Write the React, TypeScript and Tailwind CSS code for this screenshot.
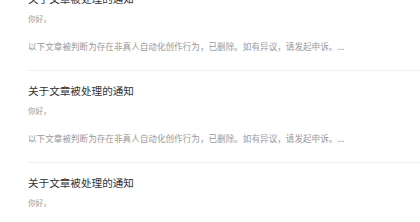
const notices = [
  { id: 1, title: "关于文章被处理的通知" },
  { id: 2, title: "关于文章被处理的通知" },
  { id: 3, title: "关于文章被处理的通知" },
]

export default function App() {
  return (
    <div
      className="h-[222px] w-[420px] overflow-hidden bg-white"
      style={{ fontFamily: '"Noto Sans CJK SC", "Noto Sans", sans-serif' }}
    >
      <div className="-mt-[21px]">
        {notices.map((n) => (
          <div key={n.id} className="ml-[28px] border-b border-[#f0f0f0] pb-[18px] pt-[12px]">
            <div className="text-[10.6px] leading-[16px] text-[#333]">{n.title}</div>
            <div className="mt-[6px] text-[7.6px] leading-[12px] text-[#999]">你好，</div>
            <div className="mt-[15px] whitespace-nowrap text-[8.6px] leading-[12px] text-[#999]">
              以下文章被判断为存在非真人自动化创作行为，已删除。如有异议，请发起申诉。...
            </div>
          </div>
        ))}
      </div>
    </div>
  )
}
